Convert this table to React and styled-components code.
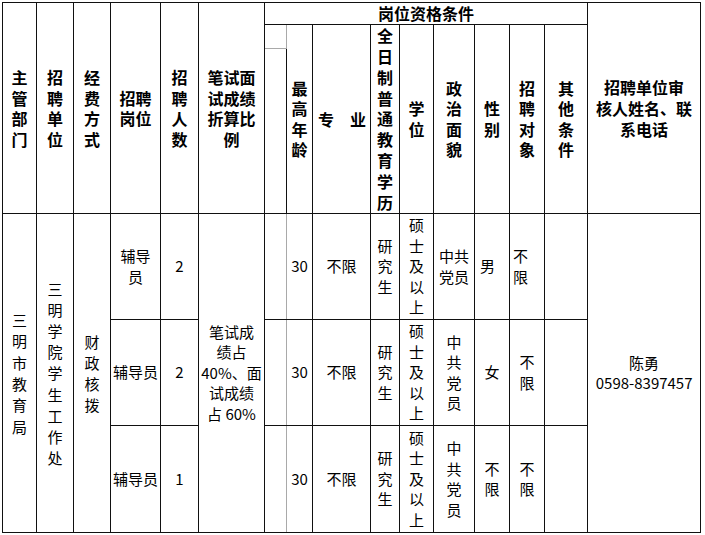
import React from "react";
import styled, { createGlobalStyle } from "styled-components";

const GlobalStyle = createGlobalStyle`
  html, body {
    margin: 0;
    padding: 0;
    background: #fff;
  }
  body {
    font-family: "Noto Sans CJK SC", "Liberation Sans", sans-serif;
    color: #000;
  }
`;

const Page = styled.div`
  padding: 2px 0 0 2px;
`;

const Table = styled.table`
  border-collapse: collapse;
  table-layout: fixed;
  width: 698px;
`;

const Col = styled.col`
  width: ${(p) => p.$w}px;
`;

const Row = styled.tr`
  height: ${(p) => p.$h}px;
`;

const Cell = styled.td`
  border: 1px solid #111;
  padding: 0 ${(p) => p.$padR ?? 0}px 0 ${(p) => p.$pad ?? 0}px;
  text-align: ${(p) => p.$align || "center"};
  vertical-align: middle;
  font-size: ${(p) => (p.$head ? 16 : 15)}px;
  font-weight: ${(p) => (p.$head ? 700 : 400)};
  line-height: ${(p) => p.$lh || 20.5}px;
  white-space: nowrap;
  overflow: hidden;
`;

// the hidden, nearly empty column between 笔试 and 最高年龄
const Narrow = styled(Cell)`
  border-right-color: #a9a9a9;
  ${(p) => p.$split && "border-bottom-color: #a9a9a9;"}
`;

const Line = styled.span`
  display: block;
`;

const Spread = styled.span`
  display: flex;
  justify-content: space-between;
  padding: 0 4px 0 5px;
`;

const widths = [34, 37, 37, 50, 38, 66, 22, 26, 58, 29, 34, 41, 35, 35, 43, 113];

const Lines = ({ lines }) =>
  lines.map((l, i) => <Line key={i}>{l}</Line>);

const rows = [
  {
    post: ["辅导", "员"],
    num: "2",
    party: ["中共", "党员"],
    sex: { lines: ["男"], align: "left", pad: 5 },
    target: { lines: ["不", "限"], align: "left", pad: 3 },
    h: 106,
  },
  {
    post: ["辅导员"],
    num: "2",
    party: ["中", "共", "党", "员"],
    sex: { lines: ["女"] },
    target: { lines: ["不", "限"] },
    h: 106,
  },
  {
    post: ["辅导员"],
    num: "1",
    party: ["中", "共", "党", "员"],
    sex: { lines: ["不", "限"] },
    target: { lines: ["不", "限"] },
    h: 107,
  },
];

const split = (s) => s.split("");

export default function App() {
  return (
    <Page>
      <GlobalStyle />
      <Table>
        <colgroup>
          {widths.map((w, i) => (
            <Col key={i} $w={w} />
          ))}
        </colgroup>
        <thead>
          <Row $h={21.5}>
            <Cell $head rowSpan={3}><Lines lines={split("主管部门")} /></Cell>
            <Cell $head rowSpan={3}><Lines lines={split("招聘单位")} /></Cell>
            <Cell $head rowSpan={3}><Lines lines={split("经费方式")} /></Cell>
            <Cell $head rowSpan={3}><Lines lines={["招聘", "岗位"]} /></Cell>
            <Cell $head rowSpan={3}><Lines lines={split("招聘人数")} /></Cell>
            <Cell $head rowSpan={3}>
              <Lines lines={["笔试面", "试成绩", "折算比", "例"]} />
            </Cell>
            <Cell $head colSpan={9} $lh={20}>岗位资格条件</Cell>
            <Cell $head rowSpan={3} $lh={21}>
              <Lines lines={["招聘单位审", "核人姓名、联", "系电话"]} />
            </Cell>
          </Row>
          <Row $h={24.5}>
            <Narrow $split />
            <Cell $head rowSpan={2}><Lines lines={split("最高年龄")} /></Cell>
            <Cell $head rowSpan={2}>
              <Spread>
                <span>专</span>
                <span>业</span>
              </Spread>
            </Cell>
            <Cell $head rowSpan={2} $lh={20.8}>
              <Lines lines={split("全日制普通教育学历")} />
            </Cell>
            <Cell $head rowSpan={2}><Lines lines={split("学位")} /></Cell>
            <Cell $head rowSpan={2}><Lines lines={split("政治面貌")} /></Cell>
            <Cell $head rowSpan={2}><Lines lines={split("性别")} /></Cell>
            <Cell $head rowSpan={2}><Lines lines={split("招聘对象")} /></Cell>
            <Cell $head rowSpan={2}><Lines lines={split("其他条件")} /></Cell>
          </Row>
          <Row $h={165}>
            <Narrow />
          </Row>
        </thead>
        <tbody>
          {rows.map((r, i) => (
            <Row key={i} $h={r.h}>
              {i === 0 && (
                <>
                  <Cell rowSpan={3} $lh={21.3}><Lines lines={split("三明市教育局")} /></Cell>
                  <Cell rowSpan={3} $lh={21.2}>
                    <Lines lines={split("三明学院学生工作处")} />
                  </Cell>
                  <Cell rowSpan={3} $lh={21}><Lines lines={split("财政核拨")} /></Cell>
                </>
              )}
              <Cell><Lines lines={r.post} /></Cell>
              <Cell>{r.num}</Cell>
              {i === 0 && (
                <Cell rowSpan={3}>
                  <Lines lines={["笔试成", "绩占", "40%、面", "试成绩", "占 60%"]} />
                </Cell>
              )}
              <Narrow />
              <Cell>30</Cell>
              <Cell>不限</Cell>
              <Cell><Lines lines={split("研究生")} /></Cell>
              <Cell $lh={20.4}><Lines lines={split("硕士及以上")} /></Cell>
              <Cell><Lines lines={r.party} /></Cell>
              <Cell $align={r.sex.align} $pad={r.sex.pad}>
                <Lines lines={r.sex.lines} />
              </Cell>
              <Cell $align={r.target.align} $pad={r.target.pad}>
                <Lines lines={r.target.lines} />
              </Cell>
              <Cell />
              {i === 0 && (
                <Cell rowSpan={3}>
                  <Lines lines={["陈勇", "0598-8397457"]} />
                </Cell>
              )}
            </Row>
          ))}
        </tbody>
      </Table>
    </Page>
  );
}
